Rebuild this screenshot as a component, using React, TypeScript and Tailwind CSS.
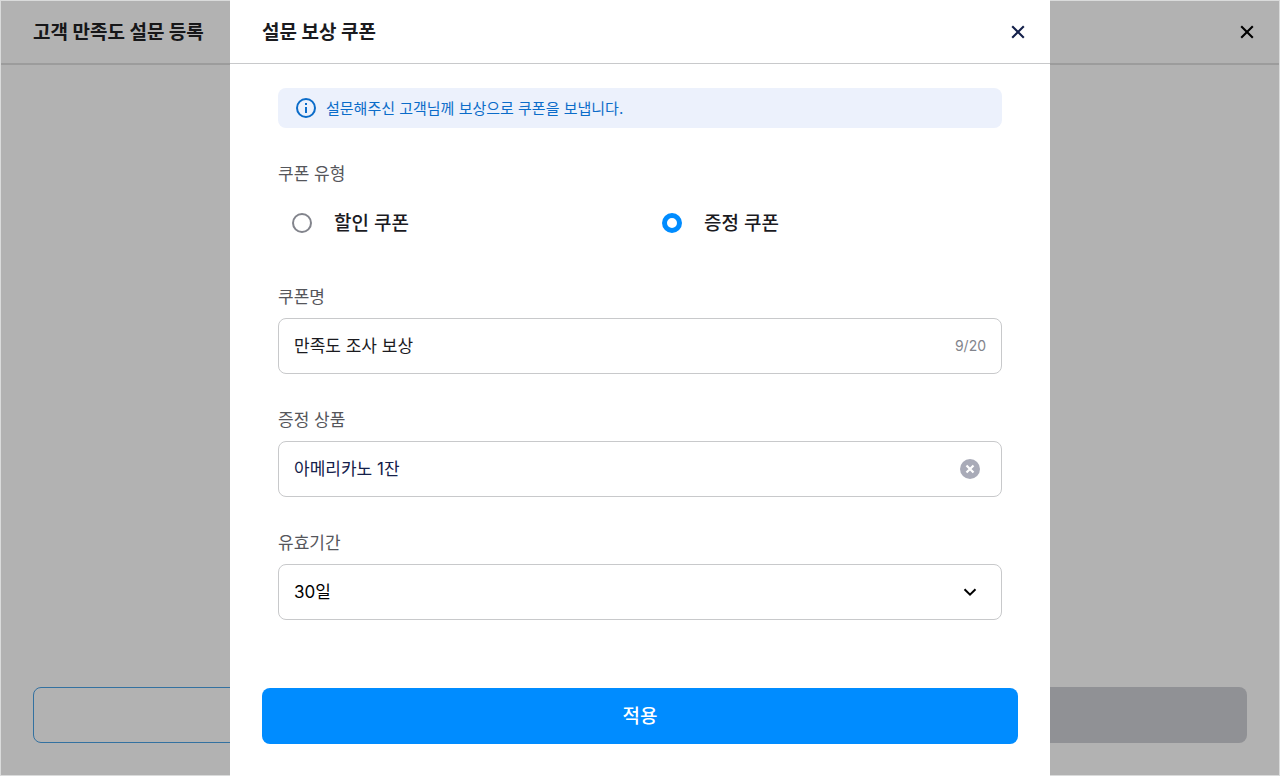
import { useState } from "react";
import type { ReactNode } from "react";

type CouponType = "discount" | "gift";

const COUPON_TYPES: { value: CouponType; label: string }[] = [
    { value: "discount", label: "할인 쿠폰" },
    { value: "gift", label: "증정 쿠폰" },
];

const NAME_LIMIT = 20;

function CloseIcon() {
    return (
        <svg viewBox="0 0 24 24" className="w-6 h-6" fill="none" stroke="currentColor" strokeWidth="2.1" strokeLinejoin="round" aria-hidden="true">
            <path d="M6.2 6.2l11.6 11.6M17.8 6.2L6.2 17.8" />
        </svg>
    );
}

function InfoIcon() {
    return (
        <svg viewBox="0 0 24 24" className="w-6 h-6 shrink-0" fill="none" stroke="currentColor" strokeWidth="2" aria-hidden="true">
            <circle cx="12" cy="12" r="9" />
            <path d="M12 11v6M12 7v2" />
        </svg>
    );
}

function ClearIcon() {
    return (
        <svg viewBox="0 0 24 24" className="w-6 h-6" fill="none" aria-hidden="true">
            <circle cx="12" cy="12" r="10" fill="#a9abb8" />
            <path d="M8.5 8.5l7 7M15.5 8.5l-7 7" stroke="#fff" strokeWidth="2.2" />
        </svg>
    );
}

function ChevronIcon() {
    return (
        <svg viewBox="0 0 24 24" className="w-6 h-6" fill="none" stroke="currentColor" strokeWidth="2" aria-hidden="true">
            <path d="M6.5 9.2l5.5 5.5 5.5-5.5" />
        </svg>
    );
}

function Field({ id, label, children }: { id: string; label: string; children: ReactNode }) {
    return (
        <div className="flex flex-col gap-2">
            <label htmlFor={id} className="text-[17px] leading-[26px] text-[#55565b]">
                {label}
            </label>
            {children}
        </div>
    );
}

function SurveyPage() {
    return (
        <div className="relative flex min-h-screen flex-col border border-[#dadbdb] bg-white">
            <header className="flex h-16 items-center justify-between border-b-2 border-[#e0e0e0] px-8">
                <h1 className="pt-0.5 text-[19px] leading-7 font-bold text-[#222225]">고객 만족도 설문 등록</h1>
                <button type="button" aria-label="닫기" className="-mr-3 text-black">
                    <CloseIcon />
                </button>
            </header>
            <main className="flex-1" />
            <footer className="grid grid-cols-2 gap-4 px-8 pb-8">
                <button type="button" aria-label="이전" className="h-14 rounded-lg border border-[#4aa2e6] bg-white" />
                <button type="button" aria-label="등록" className="h-14 rounded-lg bg-[#cfd0d6]" />
            </footer>
            <div className="absolute inset-0 bg-black/30" />
        </div>
    );
}

function CouponDialog() {
    const [type, setType] = useState<CouponType>("gift");
    const [name, setName] = useState("만족도 조사 보상");
    const [product, setProduct] = useState("아메리카노 1잔");
    const [period, setPeriod] = useState("30");

    return (
        <div className="fixed inset-0 flex justify-center">
            <form
                role="dialog"
                aria-modal="true"
                aria-labelledby="coupon-title"
                onSubmit={(e) => e.preventDefault()}
                className="flex w-full max-w-[820px] flex-col overflow-y-auto bg-white"
            >
                <div className="flex h-16 shrink-0 items-center justify-between border-b border-[#c8c9cb] px-8">
                    <h2 id="coupon-title" className="pt-0.5 text-[19px] leading-7 font-bold text-[#1b1b1f]">설문 보상 쿠폰</h2>
                    <button type="button" aria-label="닫기" className="-mr-3 text-[#14204a]">
                        <CloseIcon />
                    </button>
                </div>

                <div className="flex flex-1 flex-col gap-[33px] px-12 py-6">
                    <div className="flex h-10 items-center gap-2 rounded-lg bg-[#ecf1fc] px-4 text-[#0b6cc9]">
                        <InfoIcon />
                        <p className="pt-0.5 text-[15px]">설문해주신 고객님께 보상으로 쿠폰을 보냅니다.</p>
                    </div>

                    <fieldset>
                        <legend className="mb-2 text-[17px] leading-[26px] text-[#55565b]">쿠폰 유형</legend>
                        <div className="grid grid-cols-2 gap-4">
                            {COUPON_TYPES.map(({ value, label }) => (
                                <label key={value} className="flex h-14 items-center gap-[22px] px-[14px] text-[19px] font-medium text-[#1b1b1f]">
                                    <input
                                        type="radio"
                                        name="couponType"
                                        value={value}
                                        checked={type === value}
                                        onChange={() => setType(value)}
                                        className="h-5 w-5 appearance-none rounded-full border-2 border-[#82848c] checked:border-[5px] checked:border-[#008cff]"
                                    />
                                    <span className="pt-0.5">{label}</span>
                                </label>
                            ))}
                        </div>
                    </fieldset>

                    <Field id="coupon-name" label="쿠폰명">
                        <div className="flex h-14 items-center rounded-lg border border-[#c8c9cb] px-[15px]">
                            <input
                                id="coupon-name"
                                type="text"
                                value={name}
                                maxLength={NAME_LIMIT}
                                onChange={(e) => setName(e.target.value)}
                                className="min-w-0 flex-1 pt-0.5 text-[17px] text-[#1b1b1f] outline-none"
                            />
                            <span className="text-sm text-[#82848c]">
                                {name.length}/{NAME_LIMIT}
                            </span>
                        </div>
                    </Field>

                    <Field id="coupon-product" label="증정 상품">
                        <div className="flex h-14 items-center rounded-lg border border-[#c8c9cb] pr-[19px] pl-[15px]">
                            <input
                                id="coupon-product"
                                type="text"
                                value={product}
                                onChange={(e) => setProduct(e.target.value)}
                                className="min-w-0 flex-1 pt-0.5 text-[17px] text-[#14204a] outline-none"
                            />
                            <button type="button" aria-label="지우기" onClick={() => setProduct("")}>
                                <ClearIcon />
                            </button>
                        </div>
                    </Field>

                    <Field id="coupon-period" label="유효기간">
                        <div className="relative">
                            <select
                                id="coupon-period"
                                value={period}
                                onChange={(e) => setPeriod(e.target.value)}
                                className="h-14 w-full appearance-none rounded-lg border border-[#c8c9cb] bg-white px-[15px] pt-0.5 text-[17px] text-black"
                            >
                                <option value="30">30일</option>
                                <option value="60">60일</option>
                                <option value="90">90일</option>
                            </select>
                            <span className="pointer-events-none absolute inset-y-0 right-5 flex items-center text-black">
                                <ChevronIcon />
                            </span>
                        </div>
                    </Field>
                </div>

                <div className="px-8 pb-8">
                    <button type="submit" className="h-14 w-full rounded-lg bg-[#008cff] pt-0.5 text-[19px] font-medium text-white">
                        적용
                    </button>
                </div>
            </form>
        </div>
    );
}

export default function App() {
    return (
        <div className="font-[Inter,'Noto_Sans_CJK_KR',sans-serif]">
            <SurveyPage />
            <CouponDialog />
        </div>
    );
}
